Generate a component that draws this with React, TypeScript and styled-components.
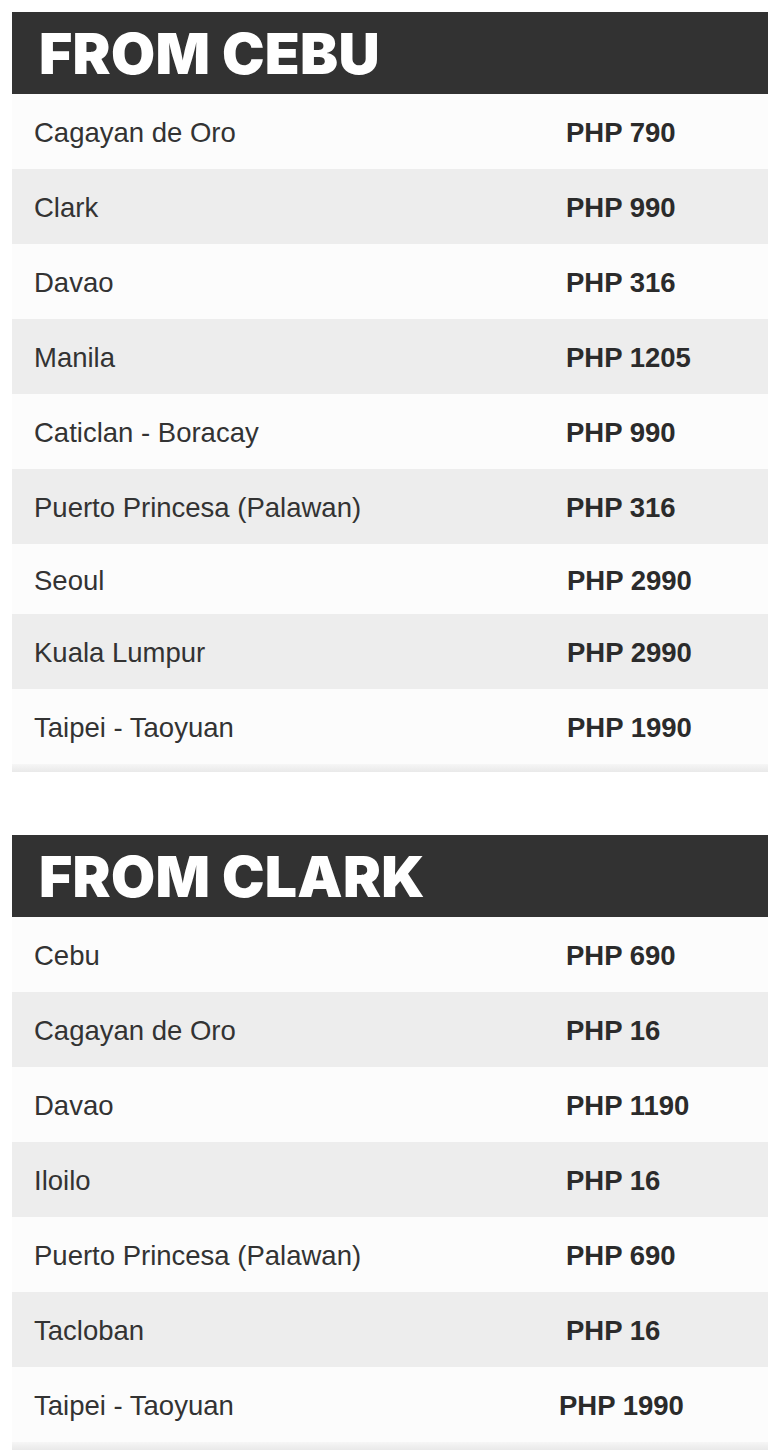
import React from "react";
import styled, { createGlobalStyle } from "styled-components";

const GlobalStyle = createGlobalStyle`
  html, body { margin: 0; padding: 0; background: #ffffff; }
  body { font-family: "Liberation Sans", Arial, sans-serif; }
  *, *::before, *::after { box-sizing: border-box; }
`;

const Page = styled.div`
  padding: 12px 0 0 12px;
  display: flex;
  flex-direction: column;
  gap: 63px;
`;

const Section = styled.section`
  display: flex;
  flex-direction: column;
`;

const Header = styled.h2`
  margin: 0;
  height: 82px;
  background: #323232;
  display: flex;
  align-items: center;
  padding: 0 0 0 27px;
  color: #ffffff;
  font-family: "Inter", "Open Sans", sans-serif;
  font-weight: 900;
  font-size: 57px;
  letter-spacing: 0.3px;
  line-height: 1;
`;

const Row = styled.div<{ $alt: boolean; $h: number }>`
  display: grid;
  grid-template-columns: 554px 1fr;
  align-items: center;
  height: ${(p) => p.$h}px;
  padding-top: 3px;
  background: ${(p) => (p.$alt ? "#ededed" : "#fcfcfc")};
`;

const Name = styled.span`
  padding-left: 22px;
  font-family: "Liberation Sans", Arial, sans-serif;
  font-size: 27.5px;
  color: #333333;
`;

const Price = styled.span<{ $shift: number }>`
  margin-left: ${(p) => p.$shift}px;
  font-family: "Liberation Sans", Arial, sans-serif;
  font-weight: 700;
  font-size: 27.5px;
  color: #2b2b2b;
`;

const Foot = styled.div`
  height: 8px;
  background: linear-gradient(#f6f6f6, #e9e9e9);
`;

type Fare = { to: string; price: string; h?: number; shift?: number };

const cebu: Fare[] = [
  { to: "Cagayan de Oro", price: "PHP 790" },
  { to: "Clark", price: "PHP 990" },
  { to: "Davao", price: "PHP 316" },
  { to: "Manila", price: "PHP 1205" },
  { to: "Caticlan - Boracay", price: "PHP 990" },
  { to: "Puerto Princesa (Palawan)", price: "PHP 316" },
  { to: "Seoul", price: "PHP 2990", h: 70, shift: 1 },
  { to: "Kuala Lumpur", price: "PHP 2990", shift: 1 },
  { to: "Taipei - Taoyuan", price: "PHP 1990", shift: 1 },
];

const clark: Fare[] = [
  { to: "Cebu", price: "PHP 690" },
  { to: "Cagayan de Oro", price: "PHP 16" },
  { to: "Davao", price: "PHP 1190" },
  { to: "Iloilo", price: "PHP 16" },
  { to: "Puerto Princesa (Palawan)", price: "PHP 690" },
  { to: "Tacloban", price: "PHP 16" },
  { to: "Taipei - Taoyuan", price: "PHP 1990", shift: -7 },
];

function FareTable({ title, fares }: { title: string; fares: Fare[] }) {
  return (
    <Section>
      <Header>{title}</Header>
      {fares.map((f, i) => (
        <Row key={f.to + i} $alt={i % 2 === 1} $h={f.h ?? 75}>
          <Name>{f.to}</Name>
          <Price $shift={f.shift ?? 0}>{f.price}</Price>
        </Row>
      ))}
      <Foot />
    </Section>
  );
}

export default function App() {
  return (
    <>
      <GlobalStyle />
      <Page>
        <FareTable title="FROM CEBU" fares={cebu} />
        <FareTable title="FROM CLARK" fares={clark} />
      </Page>
    </>
  );
}
